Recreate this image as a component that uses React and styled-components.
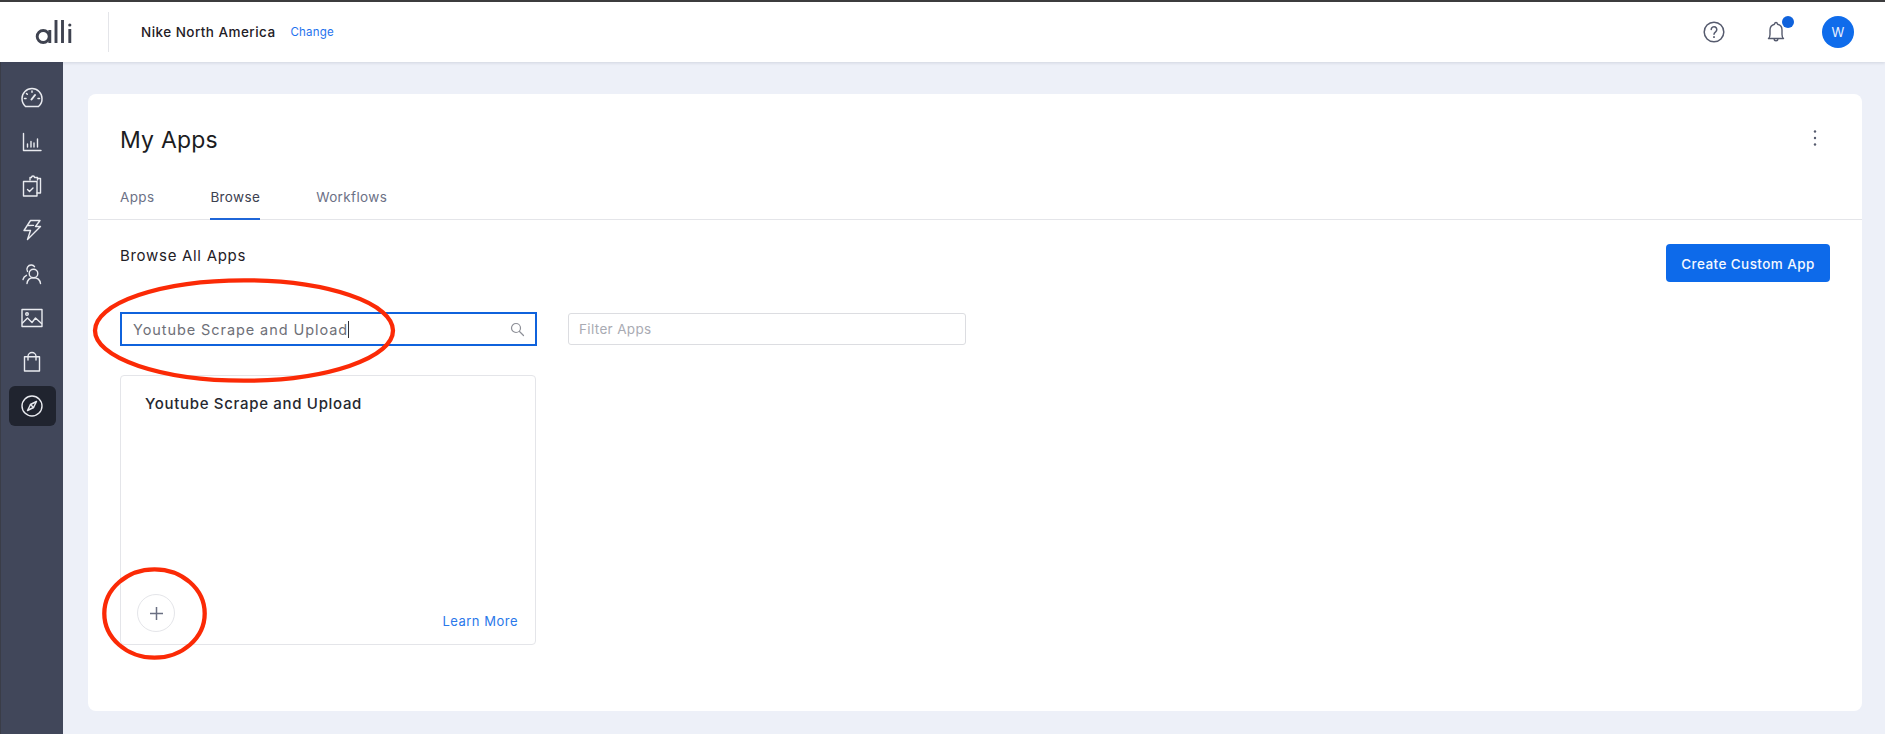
import React from "react";
import styled, { createGlobalStyle } from "styled-components";

const Global = createGlobalStyle`
  html, body { margin: 0; padding: 0; height: 100%; background: #edf0f8; overflow: hidden; }
  body { font-family: "Inter", "Liberation Sans", sans-serif; color: #1d1f26; }
  * { box-sizing: border-box; }
`;

const Page = styled.div`
  width: 1885px;
  height: 734px;
  display: flex;
  flex-direction: column;
  position: relative;
  overflow: hidden;
`;

const Header = styled.header`
  height: 62px;
  flex: none;
  background: #fff;
  border-top: 2px solid #3c3c3e;
  box-shadow: 0 1px 3px rgba(40, 50, 80, 0.14);
  display: flex;
  align-items: center;
  position: relative;
  z-index: 2;
`;

const Logo = styled.div`
  width: 109px;
  height: 40px;
  margin-top: -1px;
  border-right: 1px solid #e4e5e9;
  display: flex;
  align-items: center;
  padding-left: 34px;
  color: #3f4350;
`;

const Account = styled.div`
  margin-left: 32px;
  font-size: 13.5px;
  font-weight: 500;
  letter-spacing: 0.45px;
  color: #1f2026;
`;

const ChangeLink = styled.a`
  margin-left: 15px;
  font-size: 11.5px;
  font-weight: 400;
  letter-spacing: 0.2px;
  color: #1f73ee;
`;

const HeaderRight = styled.div`
  margin-left: auto;
  margin-right: 31px;
  display: flex;
  align-items: center;
`;

const IconSlot = styled.div`
  display: flex;
  position: relative;
  margin-right: ${(p) => p.$gap}px;
`;

const Dot = styled.span`
  position: absolute;
  top: -5px;
  right: -9px;
  width: 12px;
  height: 12px;
  border-radius: 50%;
  background: #0f62dc;
`;

const Avatar = styled.div`
  width: 32px;
  height: 32px;
  border-radius: 50%;
  background: #0f6ceb;
  color: #eaf2ff;
  font-size: 13px;
  display: flex;
  align-items: center;
  justify-content: center;
`;

const Body = styled.div`
  flex: 1;
  display: flex;
  min-height: 0;
`;

const Sidebar = styled.nav`
  width: 63px;
  flex: none;
  background: #41475a;
  border-left: 1px solid #3a3d48;
  display: flex;
  flex-direction: column;
  align-items: center;
  padding-top: 16px;
  gap: 4px;
`;

const NavItem = styled.div`
  width: 47px;
  height: 40px;
  border-radius: 6px;
  display: flex;
  align-items: center;
  justify-content: center;
  color: #e9ebf0;
  background: ${(p) => (p.$active ? "#20242f" : "transparent")};
`;

const Main = styled.main`
  flex: 1;
  padding: 32px 23px 23px 25px;
  min-width: 0;
`;

const Panel = styled.section`
  height: 617px;
  background: #fff;
  border-radius: 8px;
  display: flex;
  flex-direction: column;
`;

const PanelHead = styled.div`
  padding: 30px 32px 0;
  display: flex;
  justify-content: space-between;
  align-items: flex-start;
`;

const Title = styled.h1`
  margin: 0;
  font-size: 23px;
  line-height: 32px;
  font-weight: 400;
  letter-spacing: 0.2px;
  color: #1b1c22;
`;

const MoreBtn = styled.div`
  margin: 4px 13px 0 0;
  display: flex;
  color: #565b6e;
`;

const Tabs = styled.div`
  margin-top: 16px;
  height: 48px;
  padding: 0 32px;
  border-bottom: 1px solid #e4e5e9;
  display: flex;
  gap: 56px;
`;

const Tab = styled.div`
  height: 48px;
  display: flex;
  align-items: center;
  padding-top: 3px;
  font-size: 13.5px;
  letter-spacing: 0.36px;
  color: ${(p) => (p.$active ? "#3c4150" : "#6c7186")};
  border-bottom: ${(p) => (p.$active ? "2px solid #1f66d8" : "2px solid transparent")};
`;

const Content = styled.div`
  padding: 0 32px;
  flex: 1;
`;

const ContentTop = styled.div`
  display: flex;
  justify-content: space-between;
  align-items: flex-start;
  padding-top: 24px;
  height: 92px;
`;

const Sub = styled.div`
  font-size: 15px;
  line-height: 24px;
  letter-spacing: 0.7px;
  color: #1f2026;
`;

const Primary = styled.button`
  width: 164px;
  height: 38px;
  border: none;
  border-radius: 4px;
  padding: 2px 0 0;
  background: #0d6aea;
  color: #f4f8ff;
  font-family: inherit;
  font-size: 13.5px;
  font-weight: 500;
  letter-spacing: 0.42px;
`;

const Filters = styled.div`
  display: flex;
  align-items: center;
  gap: 31px;
`;

const SearchBox = styled.div`
  width: 417px;
  height: 34px;
  border: 2px solid #0f62dc;
  padding: 0 10px 0 11px;
  display: flex;
  align-items: center;
  justify-content: space-between;
  color: #8d8f97;
`;

const SearchText = styled.span`
  font-size: 14.5px;
  letter-spacing: 0.92px;
  color: #6e7078;
  border-right: 1px solid #30323a;
  line-height: 17px;
`;

const FilterBox = styled.div`
  width: 398px;
  height: 32px;
  border: 1px solid #dcdde1;
  border-radius: 3px;
  padding: 0 10px;
  display: flex;
  align-items: center;
  font-size: 13.5px;
  letter-spacing: 0.35px;
  color: #a9abb3;
`;

const AppCard = styled.article`
  margin-top: 29px;
  width: 416px;
  height: 270px;
  border: 1px solid #e4e5e9;
  border-radius: 4px;
  padding: 18px 17px 15px 24px;
  display: flex;
  flex-direction: column;
  justify-content: space-between;
`;

const CardTitle = styled.div`
  font-size: 15px;
  line-height: 20px;
  font-weight: 500;
  letter-spacing: 0.68px;
  color: #26282f;
`;

const CardFoot = styled.div`
  display: flex;
  justify-content: space-between;
  align-items: flex-end;
  margin-left: -8px;
`;

const AddBtn = styled.div`
  width: 38px;
  height: 38px;
  margin-bottom: -3px;
  border: 1px solid #e4e5e9;
  border-radius: 50%;
  display: flex;
  align-items: center;
  justify-content: center;
  color: #6a6f82;
`;

const LearnMore = styled.a`
  font-size: 13px;
  line-height: 16px;
  letter-spacing: 0.5px;
  color: #2a78ea;
`;

const Mark = styled.svg`
  position: absolute;
  left: 0;
  top: 0;
  pointer-events: none;
  z-index: 3;
`;

const Ic = ({ children, size = 24, sw = 1.4 }) => (
  <svg width={size} height={size} viewBox="0 0 24 24" fill="none" stroke="currentColor" strokeWidth={sw} strokeLinecap="round" strokeLinejoin="round">
    {children}
  </svg>
);

const navIcons = [
  <Ic key="g" sw={1.5}><path d="M5.500 20.500h13A9.800 9.800 0 0 0 22 12.500a10 10 0 0 0-20 0c0 3.200 1.300 6 3.500 8Z" /><path d="m11.500 13.500 3.500-4.500" strokeWidth="2" /><path d="M12 5v1.200M6.500 7.500l.8.800M4.500 12.500H6M18 12.500h1.500" /></Ic>,
  <Ic key="c"><path d="M3.500 3.500V20.500H21" /><path d="M7.500 17v-3M11 17v-5.500M14 17v-4M17.500 17V9" /></Ic>,
  <Ic key="t"><path d="M10 6V3.500h1.500a1.500 1.500 0 0 1 3 0H17.500V6" /><path d="M17.500 4.500H20.500V19H17" /><path d="M3.500 7.500H17V22H3.500z" /><path d="m7.500 15.500 2 2 3.500-3.500" /></Ic>,
  <Ic key="b"><path d="M10.500 2.500H20L15.500 8.500H20.500L7.500 21.500L10.500 12.500H4Z" /><path d="m8.500 7.500 5-.1" /></Ic>,
  <Ic key="p"><circle cx="13.500" cy="11.500" r="4.300" /><path d="M7 21.500c.5-3.800 3-5.800 6.500-5.800s6.500 2 7 5.800" /><path d="M7.500 9.500A4.300 4.300 0 0 1 11.500 3c1.400.1 2.400.8 3 1.700" /><path d="M3 17.500c.5-2 1.800-3.500 3.500-4.200" /></Ic>,
  <Ic key="i"><rect x="2" y="3.500" width="20" height="17" /><circle cx="7" cy="8" r="1.300" /><path d="m2.500 17 5-5 4.500 4.500 3.500-4.500 6 5.500" /></Ic>,
  <Ic key="s"><path d="M4.500 6.700h15V21h-15z" /><path d="M8 10V6.500a4 4 0 0 1 8 0V10" /></Ic>,
  <Ic key="e"><circle cx="12" cy="12" r="10" /><path d="m16.500 7.500-6 3-3 6 6-3Z" /><path d="m10.500 10.500 3 3" /></Ic>,
];

export default function App() {
  return (
    <Page>
      <Global />
      <Header>
        <Logo>
          <svg width="38" height="28" viewBox="0 0 38 28" fill="none" stroke="currentColor" strokeWidth="2.900" role="img" aria-label="alli">
            <title>alli</title>
            <circle cx="9.200" cy="18.500" r="6" />
            <path d="M15.800 12v13M22 2v23M28.500 2v23M35.800 11v14" />
            <circle cx="35.800" cy="7" r="1.600" fill="currentColor" stroke="none" />
          </svg>
        </Logo>
        <Account>Nike North America</Account>
        <ChangeLink>Change</ChangeLink>
        <HeaderRight>
          <IconSlot $gap={42}>
            <svg width="22" height="22" viewBox="0 0 22 22" fill="none" stroke="#565b6e" strokeWidth="1.500" strokeLinecap="round">
              <circle cx="11" cy="11" r="9.800" />
              <path d="M8.200 8.500a2.800 2.800 0 1 1 4.400 2.300c-1 .7-1.600 1.200-1.600 2.500" />
              <path d="M11 16v.2" strokeWidth="1.800" />
            </svg>
          </IconSlot>
          <IconSlot $gap={37}>
            <svg width="18" height="22" viewBox="0 0 18 22" fill="none" stroke="#565b6e" strokeWidth="1.400" strokeLinecap="round" strokeLinejoin="round">
              <path d="M1.500 17.500h15c-1.200-1-1.500-2-1.500-4V9a6 6 0 0 0-4.500-5.800C10.300 2 9.700 1.500 9 1.500s-1.300.5-1.500 1.700A6 6 0 0 0 3 9v4.500c0 2-.3 3-1.500 4Z" />
              <path d="M7.200 18a1.800 1.800 0 0 0 3.600 0" />
            </svg>
            <Dot />
          </IconSlot>
          <Avatar>W</Avatar>
        </HeaderRight>
      </Header>
      <Body>
        <Sidebar>
          {navIcons.map((icon, i) => (
            <NavItem key={i} $active={i === 7}>{icon}</NavItem>
          ))}
        </Sidebar>
        <Main>
          <Panel>
            <PanelHead>
              <Title>My Apps</Title>
              <MoreBtn>
                <svg width="4" height="20" viewBox="0 0 4 20" fill="currentColor">
                  <circle cx="2" cy="3.500" r="1.200" />
                  <circle cx="2" cy="10" r="1.200" />
                  <circle cx="2" cy="16.500" r="1.200" />
                </svg>
              </MoreBtn>
            </PanelHead>
            <Tabs>
              <Tab>Apps</Tab>
              <Tab $active>Browse</Tab>
              <Tab>Workflows</Tab>
            </Tabs>
            <Content>
              <ContentTop>
                <Sub>Browse All Apps</Sub>
                <Primary>Create Custom App</Primary>
              </ContentTop>
              <Filters>
                <SearchBox>
                  <SearchText>Youtube Scrape and Upload</SearchText>
                  <svg width="15" height="15" viewBox="0 0 15 15" fill="none" stroke="currentColor" strokeWidth="1.200" strokeLinecap="round">
                    <circle cx="6" cy="6" r="4.500" />
                    <path d="m9.500 9.500 4 4" />
                  </svg>
                </SearchBox>
                <FilterBox>Filter Apps</FilterBox>
              </Filters>
              <AppCard>
                <CardTitle>Youtube Scrape and Upload</CardTitle>
                <CardFoot>
                  <AddBtn>
                    <svg width="15" height="15" viewBox="0 0 15 15" stroke="currentColor" strokeWidth="1.500">
                      <path d="M7.500 1v13M1 7.500h13" />
                    </svg>
                  </AddBtn>
                  <LearnMore>Learn More</LearnMore>
                </CardFoot>
              </AppCard>
            </Content>
          </Panel>
        </Main>
      </Body>
      <Mark width="1885" height="734" fill="none" stroke="#fb2a06" strokeWidth="4.300">
        <ellipse cx="244" cy="330.500" rx="149" ry="50.200" />
        <ellipse cx="154.500" cy="613.500" rx="50.200" ry="44.200" />
      </Mark>
    </Page>
  );
}
